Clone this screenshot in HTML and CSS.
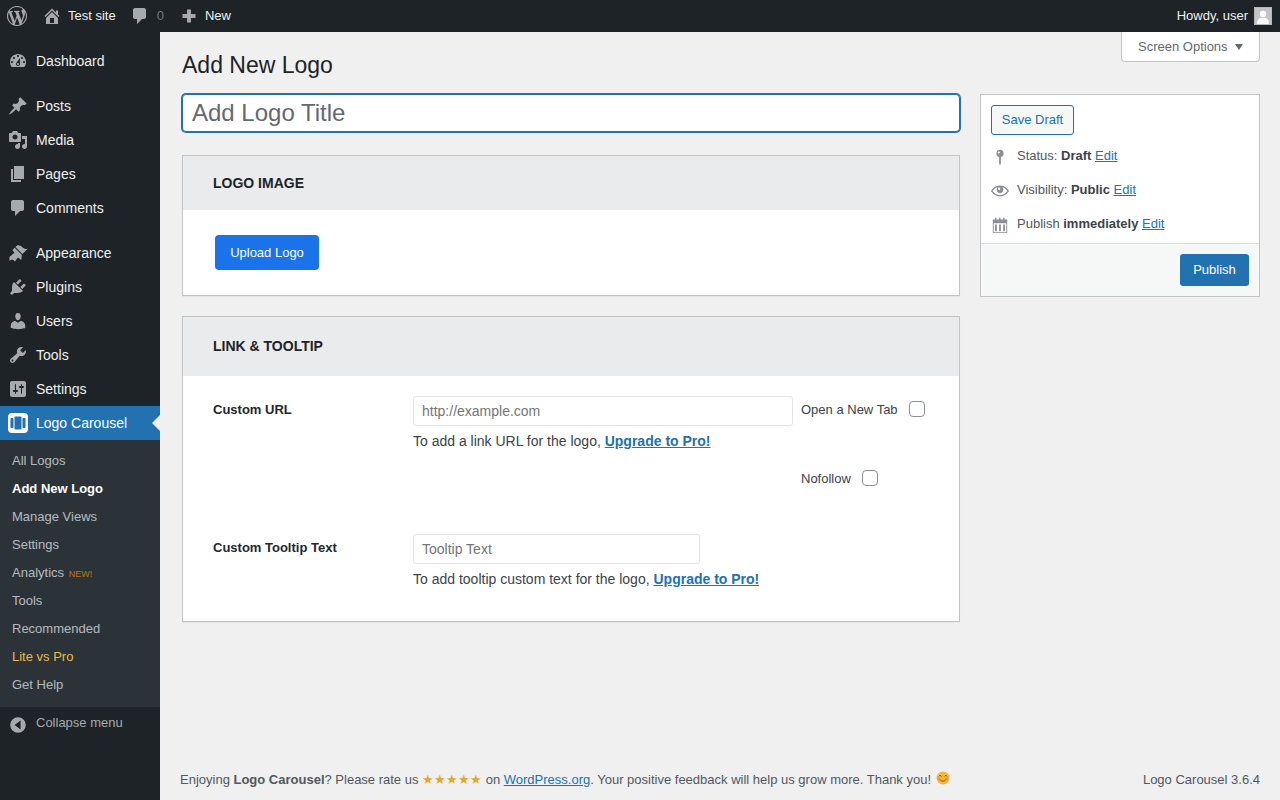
FILE: index.html
```html
<!DOCTYPE html>
<html lang="en">
<head>
  <meta charset="UTF-8" />
  <title>Add New Logo</title>
  <link rel="stylesheet" href="styles.css">
</head>
<body>

  <header class="adminbar">
    <div class="bar-left">
      <svg class="wp-logo" viewBox="0 0 20 20"><path d="M20 10c0-5.51-4.49-10-10-10C4.48 0 0 4.49 0 10c0 5.52 4.48 10 10 10 5.51 0 10-4.48 10-10zM7.78 15.37L4.37 6.22c.55-.02 1.17-.08 1.17-.08.5-.06.44-1.13-.06-1.11 0 0-1.45.11-2.37.11-.18 0-.37 0-.58-.01C4.12 2.69 6.87 1.11 10 1.11c2.33 0 4.45.87 6.05 2.34-.68-.11-1.65.39-1.65 1.58 0 .74.45 1.36.9 2.1.35.61.55 1.36.55 2.46 0 1.49-1.4 5-1.4 5l-3.03-8.37c.54-.02.82-.17.82-.17.5-.05.44-1.25-.06-1.22 0 0-1.44.12-2.38.12-.87 0-2.33-.12-2.33-.12-.5-.03-.56 1.2-.06 1.22l.92.08 1.26 3.41zM17.41 10c.24-.64.74-1.87.43-4.25.7 1.29 1.05 2.71 1.05 4.25 0 3.29-1.73 6.24-4.4 7.78.97-2.59 1.94-5.2 2.92-7.78zM6.1 18.09C3.12 16.65 1.11 13.53 1.11 10c0-1.3.23-2.48.72-3.59C3.25 10.3 4.67 14.2 6.1 18.09zm4.03-6.63l2.58 6.98c-.86.29-1.76.45-2.71.45-.79 0-1.57-.11-2.29-.33.81-2.38 1.62-4.74 2.42-7.1z"/></svg>
      <a class="bar-item bar-home">
        <svg viewBox="0 0 20 20"><path d="M16 8.5l1.53 1.53-1.06 1.06L10 4.62l-6.47 6.47-1.06-1.06L10 2.5l4 4v-2h2v4zm-6-2.46l6 5.99V18H4v-5.97zM12 17v-5H8v5h4z"/></svg>
        <span class="bar-text">Test site</span>
      </a>
      <a class="bar-item bar-comments">
        <svg viewBox="0 0 20 20"><path d="M5 2h9c1.1 0 2 .9 2 2v7c0 1.1-.9 2-2 2h-2l-5 5v-5H5c-1.1 0-2-.9-2-2V4c0-1.1.9-2 2-2z"/></svg>
        <span class="bar-text count">0</span>
      </a>
      <a class="bar-item bar-new">
        <svg viewBox="0 0 20 20"><path d="M8 3.5h4V8h4.5v4H12v4.5H8V12H3.5V8H8z"/></svg>
        <span class="bar-text">New</span>
      </a>
    </div>
    <div class="bar-right">
      <span class="bar-text">Howdy, user</span>
      <span class="avatar">
        <svg viewBox="0 0 18 18"><circle cx="9" cy="6.8" r="3.6"/><path d="M2.5 16c0-3.6 2.8-5 6.5-5s6.5 1.4 6.5 5v2h-13z"/></svg>
      </span>
    </div>
  </header>

  <div class="wrap">
    <nav class="sidebar">
      <ul class="menu">
        <li><svg viewBox="0 0 20 20"><path d="M3.76 16h12.48c1.1-1.37 1.76-3.11 1.76-5 0-4.42-3.58-8-8-8s-8 3.58-8 8c0 1.89.66 3.63 1.76 5zM10 4c.55 0 1 .45 1 1s-.45 1-1 1-1-.45-1-1 .45-1 1-1zM6 6c.55 0 1 .45 1 1s-.45 1-1 1-1-.45-1-1 .45-1 1-1zm8 0c.55 0 1 .45 1 1s-.45 1-1 1-1-.45-1-1 .45-1 1-1zm-5.37 5.55L12 7v6c0 1.1-.9 2-2 2s-2-.9-2-2c0-.57.24-1.08.63-1.45zM4 10c.55 0 1 .45 1 1s-.45 1-1 1-1-.45-1-1 .45-1 1-1zm12 0c.55 0 1 .45 1 1s-.45 1-1 1-1-.45-1-1 .45-1 1-1zm-5 3c0-.55-.45-1-1-1s-1 .45-1 1 .45 1 1 1 1-.45 1-1z" fill-rule="evenodd"/></svg>Dashboard</li>
      </ul>
      <ul class="menu">
        <li><svg viewBox="0 0 20 20"><path d="M10.44 3.02l1.82-1.82 6.36 6.35-1.83 1.82c-1.05-.68-2.48-.57-3.41.36l-.75.75c-.92.93-1.04 2.35-.35 3.41l-1.83 1.82-2.41-2.41-2.8 2.79c-.42.42-3.38 2.71-3.8 2.29s1.86-3.39 2.28-3.81l2.79-2.79L4.1 9.36l1.83-1.82c1.05.69 2.48.57 3.4-.36l.75-.75c.93-.92 1.05-2.35.36-3.41z"/></svg>Posts</li>
        <li><svg viewBox="0 0 20 20"><path d="M13 11V4c0-.55-.45-1-1-1h-1.67L9 1H5L3.67 3H2c-.55 0-1 .45-1 1v7c0 .55.45 1 1 1h10c.55 0 1-.45 1-1zM7 4.5c1.38 0 2.5 1.12 2.5 2.5S8.38 9.5 7 9.5 4.5 8.38 4.5 7 5.62 4.5 7 4.5zM14 6h5v10.5c0 1.38-1.12 2.5-2.5 2.5S14 17.88 14 16.5s1.12-2.5 2.5-2.5c.17 0 .34.02.5.05V9h-3V6zm-4 8.05V13h2v3.5c0 1.38-1.12 2.5-2.5 2.5S7 17.88 7 16.5 8.12 14 9.5 14c.17 0 .34.02.5.05z"/></svg>Media</li>
        <li><svg viewBox="0 0 20 20"><path d="M6 15V2h10v13H6zm-1 1h8v2H3V5h2v11z"/></svg>Pages</li>
        <li><svg viewBox="0 0 20 20"><path d="M5 2h9c1.1 0 2 .9 2 2v7c0 1.1-.9 2-2 2h-2l-5 5v-5H5c-1.1 0-2-.9-2-2V4c0-1.1.9-2 2-2z"/></svg>Comments</li>
      </ul>
      <ul class="menu">
        <li><svg viewBox="0 0 20 20"><path d="M14.48 11.06L7.41 3.99l1.5-1.5c.5-.56 2.3-.47 3.51.32 1.21.8 1.43 1.28 2.91 2.1 1.18.64 2.45 1.26 4.45.85zm-.71.71L6.7 4.7 4.93 6.47c-.39.39-.39 1.02 0 1.41l1.06 1.06c.39.39.39 1.03 0 1.42-.6.6-1.43 1.11-2.21 1.69-.35.26-.7.53-1.01.84C1.43 13.23.91 15.24 1.75 18c.5-1.2 2.5-1.6 3.5-.9.6.4 1.3 1.7 1.78 1.21.3-.3.57-.66.83-1.01.58-.78 1.09-1.61 1.69-2.21.39-.39 1.03-.39 1.42 0l1.06 1.06c.39.39 1.02.39 1.41 0z"/></svg>Appearance</li>
        <li><svg viewBox="0 0 20 20"><path d="M13.11 4.36L9.87 7.6 8 5.73l3.24-3.24c.35-.34 1.05-.2 1.56.32.52.51.66 1.21.31 1.55zm-8 1.77l.91-1.12 9.01 9.01-1.19.84c-.71.71-2.63 1.16-3.82 1.16H6.14L4.9 17.26c-.59.59-1.54.59-2.12 0-.59-.58-.59-1.53 0-2.12l1.24-1.24v-3.88c0-1.13.4-3.19 1.09-3.89zm7.26 3.97l3.24-3.24c.34-.35 1.04-.21 1.55.31.52.51.66 1.21.31 1.55l-3.24 3.25z"/></svg>Plugins</li>
        <li><svg viewBox="0 0 20 20"><path d="M10 9.25c-2.27 0-2.73-3.44-2.73-3.44C7 4.02 7.82 2 9.97 2c2.16 0 2.98 2.02 2.71 3.81 0 0-.41 3.44-2.68 3.44zm0 2.57L12.72 10c2.39 0 4.52 2.33 4.52 4.53v2.49s-3.65 1.13-7.24 1.13c-3.65 0-7.24-1.13-7.24-1.13v-2.49c0-2.25 1.94-4.48 4.47-4.48z"/></svg>Users</li>
        <li><svg viewBox="0 0 20 20"><path d="M16.68 9.77c-1.34 1.34-3.3 1.67-4.95.99l-5.41 6.52c-.99.99-2.59.99-3.58 0s-.99-2.59 0-3.57l6.52-5.42c-.68-1.65-.35-3.61.99-4.95 1.28-1.28 3.12-1.62 4.72-1.06l-2.89 2.89 2.82 2.82 2.86-2.87c.53 1.58.18 3.39-1.08 4.65zM3.81 16.21c.4.39 1.04.39 1.43 0 .4-.4.4-1.04 0-1.43-.39-.4-1.03-.4-1.43 0-.39.39-.39 1.03 0 1.43z" fill-rule="evenodd"/></svg>Tools</li>
        <li><svg viewBox="0 0 20 20"><path d="M18 16V4c0-1.1-.9-2-2-2H4c-1.1 0-2 .9-2 2v12c0 1.1.9 2 2 2h12c1.1 0 2-.9 2-2zM8 11h1c.55 0 1 .45 1 1s-.45 1-1 1H8v1.5c0 .28-.22.5-.5.5s-.5-.22-.5-.5V13H6c-.55 0-1-.45-1-1s.45-1 1-1h1V5.5c0-.28.22-.5.5-.5s.5.22.5.5V11zm5-2h-1c-.55 0-1-.45-1-1s.45-1 1-1h1V5.5c0-.28.22-.5.5-.5s.5.22.5.5V7h1c.55 0 1 .45 1 1s-.45 1-1 1h-1v5.5c0 .28-.22.5-.5.5s-.5-.22-.5-.5V9z" fill-rule="evenodd"/></svg>Settings</li>
        <li class="current">
          <span class="carousel-icon">
            <svg viewBox="0 0 20 20"><rect x="2.5" y="5" width="3" height="10" rx=".8"/><rect x="6.5" y="3.5" width="7" height="13" rx=".8"/><rect x="14.5" y="5" width="3" height="10" rx=".8"/></svg>
          </span>
          Logo Carousel
        </li>
      </ul>
      <ul class="submenu">
        <li>All Logos</li>
        <li class="active">Add New Logo</li>
        <li>Manage Views</li>
        <li>Settings</li>
        <li>Analytics <span class="new-tag">NEW!</span></li>
        <li>Tools</li>
        <li>Recommended</li>
        <li class="gold">Lite vs Pro</li>
        <li>Get Help</li>
      </ul>
      <div class="collapse">
        <svg viewBox="0 0 20 20"><path d="M10 2.2a7.8 7.8 0 1 0 0 15.6 7.8 7.8 0 0 0 0-15.6zM12.6 5.6v8.8L6.6 10z" fill-rule="evenodd"/></svg>
        Collapse menu
      </div>
    </nav>

    <main class="main">
      <div class="page-head">
        <h1>Add New Logo</h1>
        <button class="screen-options">Screen Options <i class="caret"></i></button>
      </div>

      <div class="columns">
        <div class="col-left">
          <input class="title-input" type="text" placeholder="Add Logo Title">

          <section class="box">
            <h2>LOGO IMAGE</h2>
            <div class="box-body upload-body">
              <button class="upload-btn">Upload Logo</button>
            </div>
          </section>

          <section class="box box-link">
            <h2>LINK &amp; TOOLTIP</h2>
            <div class="box-body link-body">
              <div class="field-row url-row">
                <label>Custom URL</label>
                <div class="url-fields">
                  <div class="url-main">
                    <input class="text-field" type="text" placeholder="http://example.com">
                    <p class="help">To add a link URL for the logo, <a href="#">Upgrade to Pro!</a></p>
                  </div>
                  <div class="url-options">
                    <div class="option option-tab">Open a New Tab <input type="checkbox"></div>
                    <div class="option option-nofollow">Nofollow <input type="checkbox"></div>
                  </div>
                </div>
              </div>
              <div class="field-row">
                <label>Custom Tooltip Text</label>
                <div>
                  <input class="text-field tooltip-field" type="text" placeholder="Tooltip Text">
                  <p class="help">To add tooltip custom text for the logo, <a href="#">Upgrade to Pro!</a></p>
                </div>
              </div>
            </div>
          </section>
        </div>

        <aside class="publish-box">
          <div class="publish-body">
            <button class="save-draft">Save Draft</button>
            <div class="pub-row">
              <svg viewBox="0 0 20 20"><path d="M10 2a4 4 0 0 0-1 7.87V17c0 .8.4 1.6 1 2 .6-.4 1-1.2 1-2V9.87A4 4 0 0 0 10 2zM8.7 3.8a1.2 1.2 0 1 1 0 2.4 1.2 1.2 0 0 1 0-2.4z" fill-rule="evenodd"/></svg>
              <span>Status: <b>Draft</b> <a href="#">Edit</a></span>
            </div>
            <div class="pub-row">
              <svg viewBox="0 0 20 20"><path d="M19.7 9.4C17.7 6 14 3.9 10 3.9S2.3 6 .3 9.4L0 10l.3.6c2 3.4 5.7 5.5 9.7 5.5s7.7-2.1 9.7-5.5l.3-.6-.3-.6zM10 14.6c-3.3 0-6.4-1.7-8.1-4.6C3.1 8 5 6.6 7.2 5.9 6.6 6.7 6.3 7.7 6.3 8.8c0 2 1.7 3.7 3.7 3.7s3.7-1.7 3.7-3.7c0-1.1-.3-2.1-.9-2.9 2.2.7 4.1 2.1 5.3 4.1-1.7 2.9-4.8 4.6-8.1 4.6zM9 6.2a1.3 1.3 0 1 1 0 2.6 1.3 1.3 0 0 1 0-2.6z" fill-rule="evenodd"/></svg>
              <span>Visibility: <b>Public</b> <a href="#">Edit</a></span>
            </div>
            <div class="pub-row">
              <svg viewBox="0 0 20 20"><path d="M2 4h2.5V2.2c0-.7 1.5-.7 1.5 0V4h3V2.2c0-.7 1.5-.7 1.5 0V4h3V2.2c0-.7 1.5-.7 1.5 0V4H18v15H2zm1 4v10h14V8zm1.5 1.5h2V17h-2zm4.5 0h2V17H9zm4.5 0h2V17h-2z" fill-rule="evenodd"/></svg>
              <span>Publish <b>immediately</b> <a href="#">Edit</a></span>
            </div>
          </div>
          <div class="publish-foot">
            <button class="publish-btn">Publish</button>
          </div>
        </aside>
      </div>

      <footer class="page-foot">
        <p>Enjoying <b>Logo Carousel</b>? Please rate us <span class="stars">★★★★★</span> on <a href="#">WordPress.org</a>. Your positive feedback will help us grow more. Thank you!
          <svg class="smile" viewBox="0 0 14 14"><circle cx="7" cy="7" r="6.5" fill="#f7b731"/><circle cx="3" cy="8" r="1.6" fill="#f28a6a"/><circle cx="11" cy="8" r="1.6" fill="#f28a6a"/><path d="M2.8 5.4c.6-1.2 2-1.2 2.6 0M8.6 5.4c.6-1.2 2-1.2 2.6 0" fill="none" stroke="#7a4a12" stroke-width=".9"/><path d="M4.2 8.6c1 2 4.6 2 5.6 0" fill="none" stroke="#7a4a12" stroke-width=".9"/></svg>
        </p>
        <p>Logo Carousel 3.6.4</p>
      </footer>
    </main>
  </div>

</body>
</html>
```

FILE: styles.css
```css
* {
  box-sizing: border-box;
}

body {
  margin: 0;
  height: 100vh;
  display: flex;
  flex-direction: column;
  overflow: hidden;
  font-family: "Liberation Sans", Arial, sans-serif;
  font-size: 13px;
  color: #3c434a;
  background: #f0f0f1;
}

a {
  color: #2271b1;
}

button,
input {
  font-family: inherit;
}

/* admin bar */
.adminbar {
  height: 32px;
  flex: none;
  display: flex;
  justify-content: space-between;
  align-items: center;
  background: #1d2327;
  color: #f0f0f1;
}

.bar-left,
.bar-right,
.bar-item {
  display: flex;
  align-items: center;
}

.bar-item {
  color: #f0f0f1;
}

.bar-text {
  margin-bottom: 1px;
}

.wp-logo {
  width: 20px;
  height: 20px;
  margin-left: 7px;
  fill: #a7aaad;
}

.bar-item svg {
  width: 20px;
  height: 20px;
  fill: #a7aaad;
}

.bar-home {
  margin-left: 15px;
  gap: 6px;
}

.bar-comments {
  margin-left: 14px;
  gap: 7px;
}

.count {
  color: #72777c;
}

.bar-new {
  margin-left: 15px;
  gap: 6px;
}

.bar-right {
  gap: 6px;
  padding-right: 8px;
}

.avatar {
  width: 18px;
  height: 18px;
  background: #c3c4c7;
  border: 1px solid #b5b7ba;
  overflow: hidden;
}

.avatar svg {
  display: block;
  width: 16px;
  height: 16px;
  fill: #fff;
}

/* sidebar */
.wrap {
  flex: 1;
  display: flex;
  min-height: 0;
}

.sidebar {
  width: 160px;
  flex: none;
  padding-top: 12px;
  background: #1d2327;
}

.menu,
.submenu {
  list-style: none;
  margin: 0;
  padding: 0;
}

.menu {
  margin-bottom: 11px;
}

.menu:nth-of-type(3) {
  margin-bottom: 0;
}

.menu li {
  position: relative;
  height: 34px;
  display: flex;
  align-items: center;
  font-size: 14px;
  color: #f0f0f1;
}

.menu li > svg {
  width: 20px;
  height: 20px;
  margin: 0 8px;
  fill: #a7aaad;
}

.menu li.current {
  background: #2271b1;
  color: #fff;
}

.menu li.current::after {
  content: "";
  position: absolute;
  right: 0;
  top: 9px;
  border: 8px solid transparent;
  border-left-width: 0;
  border-right-color: #f0f0f1;
}

.carousel-icon {
  width: 20px;
  height: 20px;
  margin: 0 8px;
  border-radius: 4px;
  background: #fff;
}

.carousel-icon svg {
  display: block;
  fill: #2271b1;
}

.submenu {
  padding: 7px 0 8px;
  background: #2c3338;
}

.submenu li {
  height: 28px;
  line-height: 28px;
  padding-left: 12px;
  color: rgba(240, 246, 252, 0.7);
}

.submenu li.active {
  color: #fff;
  font-weight: 700;
}

.submenu li.gold {
  color: #f0b849;
}

.new-tag {
  margin-left: 1px;
  font-size: 9px;
  color: #c3700f;
}

.collapse {
  display: flex;
  align-items: flex-start;
  gap: 8px;
  height: 34px;
  padding: 8px 0 0 8px;
  line-height: 15px;
  color: #a7aaad;
}

.collapse svg {
  width: 20px;
  height: 20px;
  fill: #a7aaad;
}

/* main */
.main {
  flex: 1;
  min-width: 0;
  display: flex;
  flex-direction: column;
  padding: 0 20px 0 22px;
}

.page-head {
  display: flex;
  justify-content: space-between;
  align-items: flex-start;
  height: 62px;
}

h1 {
  margin: 18px 0 0;
  font-size: 23px;
  font-weight: 400;
  line-height: 30px;
  color: #1d2327;
}

.screen-options {
  width: 139px;
  height: 30px;
  display: flex;
  align-items: center;
  gap: 7px;
  padding: 0 0 0 16px;
  font-size: 13px;
  color: #646970;
  background: #fff;
  border: 1px solid #c3c4c7;
  border-top: none;
  border-radius: 0 0 4px 4px;
}

.caret {
  border: 4px solid transparent;
  border-top: 6px solid #646970;
  border-bottom: 0;
}

.columns {
  display: flex;
  align-items: flex-start;
  gap: 20px;
}

.col-left {
  width: 778px;
}

.title-input {
  display: block;
  width: 100%;
  height: 38px;
  padding: 0 9px;
  font-size: 24px;
  color: #2c3338;
  background: #fff;
  border: 1px solid #2271b1;
  border-radius: 4px;
  box-shadow: 0 0 0 1px #2271b1;
  outline: none;
}

.title-input::placeholder {
  color: #646970;
}

.box {
  margin-top: 23px;
  background: #fff;
  border: 1px solid #c3c4c7;
  box-shadow: 0 1px 1px rgba(0, 0, 0, 0.04);
}

.box h2 {
  margin: 0;
  height: 54px;
  padding-left: 30px;
  font-size: 14px;
  line-height: 54px;
  color: #1d2327;
  background: #eaebec;
}

.upload-body {
  height: 85px;
  padding: 25px 32px;
}

.upload-btn {
  width: 104px;
  height: 35px;
  font-size: 13px;
  color: #fff;
  background: #1a73e8;
  border: none;
  border-radius: 4px;
}

.box-link {
  margin-top: 20px;
}

.box-link h2 {
  height: 59px;
  line-height: 58px;
}

.link-body {
  height: 245px;
  padding: 20px 30px 0;
}

.field-row {
  display: grid;
  grid-template-columns: 200px 1fr;
}

.url-row {
  height: 138px;
}

.field-row label {
  padding-top: 6px;
  font-weight: 700;
  line-height: 15px;
  color: #23282d;
}

.url-fields {
  display: flex;
  gap: 8px;
}

.url-main {
  width: 380px;
}

.text-field {
  display: block;
  width: 100%;
  height: 30px;
  padding: 0 8px;
  font-size: 14px;
  background: #fff;
  border: 1px solid #e4e5e7;
  border-radius: 3px;
  outline: none;
}

.text-field::placeholder {
  color: #757575;
}

.tooltip-field {
  width: 287px;
}

.help {
  margin: 7px 0 0;
  font-size: 14px;
  line-height: 16px;
}

.help a {
  font-weight: 700;
}

.option {
  display: flex;
  align-items: center;
  height: 16px;
}

.option input {
  appearance: none;
  width: 16px;
  height: 16px;
  margin: 0;
  background: #fff;
  border: 1px solid #8c8f94;
  border-radius: 4px;
}

.option-tab {
  gap: 11px;
  margin-top: 5px;
}

.option-nofollow {
  gap: 11px;
  margin-top: 53px;
}

/* publish box */
.publish-box {
  width: 280px;
  background: #fff;
  border: 1px solid #c3c4c7;
}

.publish-body {
  height: 148px;
  padding: 10px;
}

.save-draft {
  display: block;
  width: 83px;
  height: 30px;
  margin-bottom: 3px;
  padding: 0 0 2px;
  font-size: 13px;
  color: #2271b1;
  background: #f6f7f7;
  border: 1px solid #2271b1;
  border-radius: 3px;
}

.pub-row {
  display: flex;
  align-items: center;
  gap: 8px;
  height: 34px;
  color: #50575e;
}

.pub-row svg {
  width: 18px;
  height: 18px;
  flex: none;
  margin-top: 4px;
  fill: #8c8f94;
}

.pub-row b {
  color: #3c434a;
}

.publish-foot {
  display: flex;
  justify-content: flex-end;
  height: 53px;
  padding: 10px;
  background: #f6f7f7;
  border-top: 1px solid #dcdcde;
}

.publish-btn {
  width: 69px;
  height: 32px;
  padding: 0 0 2px;
  font-size: 13px;
  color: #fff;
  background: #2271b1;
  border: none;
  border-radius: 3px;
}

/* footer */
.page-foot {
  display: flex;
  justify-content: space-between;
  align-items: center;
  margin: auto 0 0 -2px;
  height: 42px;
  color: #50575e;
}

.page-foot p {
  margin: 0;
}

.stars {
  color: #e6a817;
}

.smile {
  width: 14px;
  height: 14px;
  margin-left: 1px;
  vertical-align: -1px;
}
```
